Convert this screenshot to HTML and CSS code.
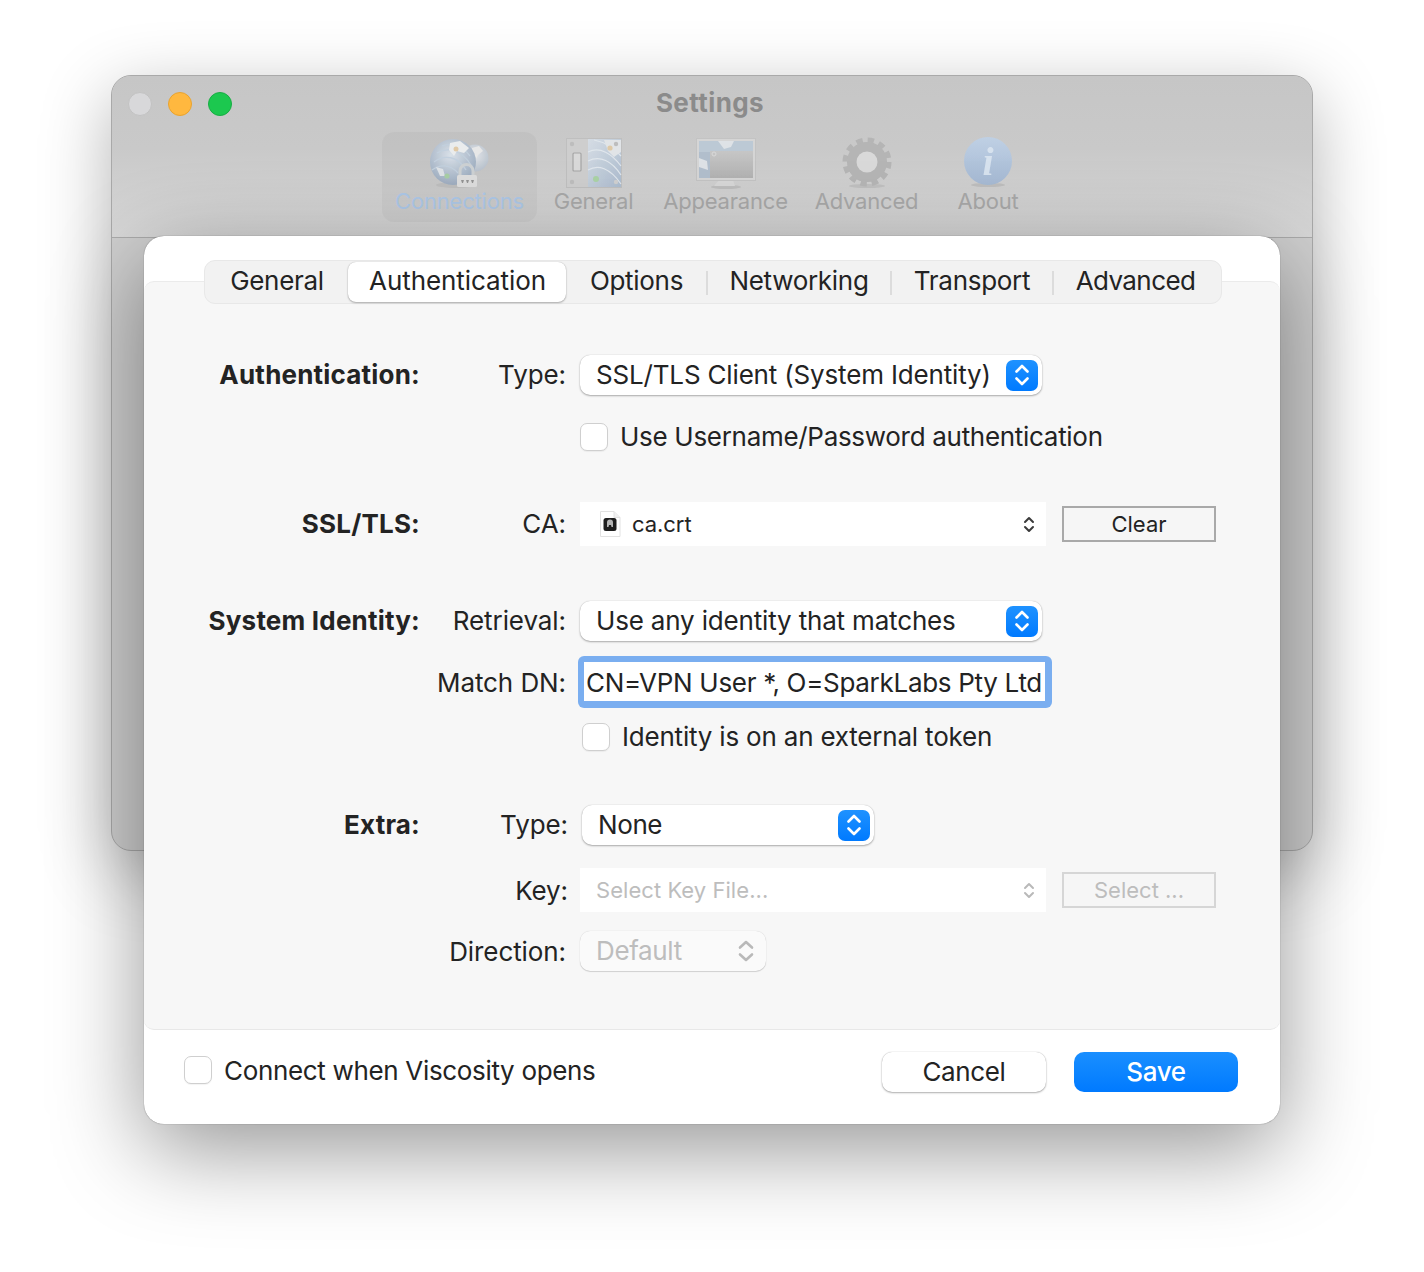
FILE: index.html
```html
<!DOCTYPE html>
<html lang="en">
<head>
<meta charset="utf-8">
<title>Settings</title>
<link rel="stylesheet" href="styles.css">
</head>
<body>
<div class="stage">
  <section class="window">
    <header class="titlebar">
      <div class="lights">
        <span class="light light-off"></span>
        <span class="light light-min"></span>
        <span class="light light-max"></span>
      </div>
      <div class="title">Settings</div>
      <nav class="toolbar">
        <div class="tool tool-connections">
          <svg class="tool-icon" width="64" height="54" viewBox="0 0 64 54">
            <defs>
              <radialGradient id="g1" cx=".45" cy=".35" r=".75"><stop offset="0" stop-color="#cfd6dd"/><stop offset="1" stop-color="#8c9cb0"/></radialGradient>
              <radialGradient id="g2" cx=".5" cy=".4" r=".7"><stop offset="0" stop-color="#d6d9dc"/><stop offset="1" stop-color="#a9b3bf"/></radialGradient>
            </defs>
            <ellipse cx="28" cy="49" rx="20" ry="3" fill="#b4b4b4"/>
            <circle cx="47" cy="22" r="13.5" fill="url(#g2)"/>
            <path d="M44 12l7-2 4 5-5 4-3 6-4-5z" fill="#dcdcdc"/>
            <circle cx="25" cy="26" r="23" fill="url(#g1)"/>
            <g fill="none" stroke="#b9c6d3" stroke-width="1.3">
              <path d="M4 34c8-6 18-6 26 3"/><path d="M6 26c10-8 24-6 32 8"/><path d="M9 17c10-6 24-4 34 12"/><path d="M14 10c9-3 20-1 28 10"/>
            </g>
            <path d="M22 7l10-2 9 7-5 5-7-2-3 5-5-6z" fill="#dfe1e2"/>
            <path d="M8 31l7 2 2 7-5 0z" fill="#d3d7db"/>
            <circle cx="28" cy="13" r="2.5" fill="#d5bf9f"/>
            <circle cx="19" cy="40" r="2.6" fill="#a0c49d"/>
            <path d="M32 40v-5a6.5 6.5 0 0 1 13 0v5" fill="none" stroke="#c3c7c9" stroke-width="3"/>
            <rect x="29" y="39" width="20" height="12" rx="1.5" fill="#d2d2d2"/>
            <path d="M33 44h3l-1 3h-1zM38 44h3l-1 3h-1zM43 44h3l-1 3h-1z" fill="#8c8c8c"/>
          </svg>
          <span class="tool-label tool-label-on">Connections</span>
        </div>
        <div class="tool">
          <svg class="tool-icon" width="56" height="54" viewBox="0 0 56 54">
            <defs>
              <linearGradient id="g3" x1="0" y1="0" x2="1" y2="1"><stop offset="0" stop-color="#cbd2d9"/><stop offset="1" stop-color="#a4b3c5"/></linearGradient>
            </defs>
            <rect x=".5" y="2.5" width="55" height="49" fill="#c4c4c4" stroke="#b6b6b6"/>
            <rect x="22" y="3" width="33" height="48" fill="url(#g3)"/>
            <g fill="none" stroke="#d5dbe1" stroke-width="1.2">
              <path d="M22 34c10-6 22-2 33 14"/><path d="M22 25c12-6 24 0 33 14"/><path d="M22 16c12-6 24 2 33 14"/><path d="M28 4c10 2 20 8 27 16"/>
            </g>
            <path d="M38 4h17v12l-7 5-6-6z" fill="#d6d9dc"/>
            <circle cx="44" cy="12" r="2.6" fill="#d3bf9f"/>
            <circle cx="30" cy="43" r="3" fill="#a2c89d"/>
            <circle cx="6" cy="8" r="2.2" fill="#b4b4b4"/><circle cx="6" cy="46" r="2.2" fill="#b4b4b4"/>
            <circle cx="50" cy="8" r="2.2" fill="#b4b4b4"/><circle cx="50" cy="46" r="2.2" fill="#c6c6c6"/>
            <rect x="7" y="17" width="8" height="18" rx="1" fill="#cfcfcf" stroke="#9d9d9d" stroke-width="1.2"/>
          </svg>
          <span class="tool-label">General</span>
        </div>
        <div class="tool">
          <svg class="tool-icon" width="60" height="54" viewBox="0 0 60 54">
            <defs>
              <linearGradient id="g4" x1="0" y1="0" x2="0" y2="1"><stop offset="0" stop-color="#bdbdbd"/><stop offset="1" stop-color="#a9a9a9"/></linearGradient>
            </defs>
            <ellipse cx="30" cy="51" rx="15" ry="2" fill="#b4b4b4"/>
            <path d="M23 44h14l2 6H18z" fill="#cdcdcd"/>
            <rect x=".5" y="2.5" width="59" height="42" fill="#cbcbcb" stroke="#bababa"/>
            <rect x="3" y="5" width="54" height="37" fill="#a9b5c2"/>
            <path d="M3 5h54v11H3z" fill="#b3bfcb"/>
            <path d="M22 5h16l-3 6-7 2zM3 22l8 3 1 9-9-3z" fill="#d3d7db"/>
            <rect x="14" y="15" width="43" height="27" fill="url(#g4)"/>
            <circle cx="18" cy="18" r="2" fill="none" stroke="#cfcfcf"/>
          </svg>
          <span class="tool-label">Appearance</span>
        </div>
        <div class="tool">
          <svg class="tool-icon" width="54" height="54" viewBox="0 0 54 54">
            <ellipse cx="27" cy="50" rx="18" ry="2" fill="#b6b6b6"/>
            <circle cx="27" cy="26" r="22" fill="none" stroke="#acacac" stroke-width="5" stroke-dasharray="6.4 5.12"/>
            <circle cx="27" cy="26" r="15" fill="none" stroke="#acacac" stroke-width="10"/>
            <circle cx="27" cy="26" r="10.500" fill="#cfcfcf"/>
          </svg>
          <span class="tool-label">Advanced</span>
        </div>
        <div class="tool">
          <svg class="tool-icon" width="50" height="54" viewBox="0 0 50 54">
            <defs>
              <linearGradient id="g5" x1="0" y1="0" x2="0" y2="1"><stop offset="0" stop-color="#b6c6d9"/><stop offset="1" stop-color="#9db0c9"/></linearGradient>
            </defs>
            <ellipse cx="25" cy="49" rx="17" ry="2" fill="#b4b4b4"/>
            <circle cx="25" cy="25" r="24" fill="url(#g5)"/>
            <text class="info-i" x="25" y="39" text-anchor="middle">i</text>
          </svg>
          <span class="tool-label">About</span>
        </div>
      </nav>
    </header>
  </section>

  <section class="sheet">
    <div class="tabs-wrap">
      <div class="tabs">
        <div class="tab tab-plain">General</div>
        <div class="tab tab-active">Authentication</div>
        <div class="tab tab-sep">Options</div>
        <div class="tab tab-sep">Networking</div>
        <div class="tab tab-sep">Transport</div>
        <div class="tab tab-last">Advanced</div>
      </div>
    </div>

    <div class="panel">
      <div class="row row-1">
        <div class="heading">Authentication:</div>
        <div class="label">Type:</div>
        <div class="popup popup-type">
          <span>SSL/TLS Client (System Identity)</span>
          <span class="stepper"><svg width="14" height="22" viewBox="0 0 14 22"><path d="M1.5 7.5L7 2l5.5 5.5M1.5 14.500L7 20l5.500-5.500"/></svg></span>
        </div>
      </div>
      <div class="row row-2">
        <div class="heading"></div>
        <div class="label"></div>
        <label class="check"><span class="box"></span><span class="check-text">Use Username/Password authentication</span></label>
      </div>

      <div class="row row-3">
        <div class="heading">SSL/TLS:</div>
        <div class="label">CA:</div>
        <div class="file-field">
          <svg class="doc" width="22" height="26" viewBox="0 0 22 26">
            <path d="M1.500 .5H15L21 6.500V25.500H1.500z" fill="#fff" stroke="#e2e2e2"/>
            <path d="M15 .5V6.500H21" fill="#f0f0f0" stroke="#e2e2e2"/>
            <rect x="4.500" y="7" width="13" height="13" rx="2.500" fill="#1e1e1e"/>
            <path d="M8 16v-4.500a3 3 0 0 1 6 0V16h-1.500l-.5-2h-2l-.5 2z" fill="#b5b5b5"/>
          </svg>
          <span class="file-name">ca.crt</span>
          <svg class="mini" width="12" height="17" viewBox="0 0 12 17"><path d="M2 6l4-4 4 4M2 11l4 4 4-4"/></svg>
        </div>
        <div class="square-btn">Clear</div>
      </div>

      <div class="row row-4">
        <div class="heading">System Identity:</div>
        <div class="label">Retrieval:</div>
        <div class="popup popup-type">
          <span>Use any identity that matches</span>
          <span class="stepper"><svg width="14" height="22" viewBox="0 0 14 22"><path d="M1.5 7.5L7 2l5.5 5.5M1.5 14.500L7 20l5.500-5.500"/></svg></span>
        </div>
      </div>
      <div class="row row-5">
        <div class="heading"></div>
        <div class="label label-low">Match DN:</div>
        <div class="focus-field"><div class="focus-input">CN=VPN User *, O=SparkLabs Pty Ltd</div></div>
      </div>
      <div class="row row-6">
        <div class="heading"></div>
        <div class="label"></div>
        <label class="check check-shift"><span class="box"></span><span class="check-text">Identity is on an external token</span></label>
      </div>

      <div class="row row-7">
        <div class="heading">Extra:</div>
        <div class="label label-shift">Type:</div>
        <div class="popup popup-none">
          <span>None</span>
          <span class="stepper"><svg width="14" height="22" viewBox="0 0 14 22"><path d="M1.5 7.5L7 2l5.5 5.5M1.5 14.500L7 20l5.500-5.500"/></svg></span>
        </div>
      </div>
      <div class="row row-8">
        <div class="heading"></div>
        <div class="label label-shift label-low">Key:</div>
        <div class="file-field file-off">
          <span class="file-name file-placeholder">Select Key File...</span>
          <svg class="mini" width="12" height="17" viewBox="0 0 12 17"><path d="M2 6l4-4 4 4M2 11l4 4 4-4"/></svg>
        </div>
        <div class="square-btn square-off">Select ...</div>
      </div>
      <div class="row row-9">
        <div class="heading"></div>
        <div class="label label-low">Direction:</div>
        <div class="popup popup-off">
          <span>Default</span>
          <svg class="mini-off" width="16" height="22" viewBox="0 0 16 22"><path d="M2 7.500L8 2l6 5.500M2 14.500L8 20l6-5.500"/></svg>
        </div>
      </div>
    </div>

    <footer class="footer">
      <label class="check"><span class="box"></span><span class="check-text">Connect when Viscosity opens</span></label>
      <div class="actions">
        <div class="btn btn-cancel">Cancel</div>
        <div class="btn btn-save">Save</div>
      </div>
    </footer>
  </section>
</div>
</body>
</html>
```
FILE: styles.css
```css
* { box-sizing: border-box; }
html, body { margin: 0; padding: 0; background: #fff; }
body { font-family: Inter, "Liberation Sans", sans-serif; color: #232323; }
.stage { position: relative; width: 1424px; height: 1272px; overflow: hidden; background: #fff; }

/* background window */
.window {
  position: absolute; left: 111px; top: 75px; width: 1202px; height: 776px;
  border-radius: 20px;
  background: #cfcfcf;
  border: 1px solid #a9a9a9;
  box-shadow: 0 20px 70px rgba(0,0,0,.3);
}
.titlebar {
  height: 162px; border-bottom: 1px solid #ababab; border-radius: 19px 19px 0 0;
  background: linear-gradient(#c6c6c6, #c9c9c9 45%, #d8d8d8);
  display: flex; flex-direction: column; position: relative;
}
.lights { position: absolute; left: 16px; top: 16px; display: flex; gap: 16px; }
.light { width: 24px; height: 24px; border-radius: 50%; }
.light-off { background: #d8d8da; border: 1px solid #c2c2c2; }
.light-min { background: #ffb83f; border: 1px solid #e9a32f; }
.light-max { background: #1cc84f; border: 1px solid #18ad44; }
.title { text-align: center; margin-top: 11px; height: 32px; line-height: 32px; font-size: 26px; font-weight: 700; color: #8b8b8b; letter-spacing: .42px; padding-right: 4px; }
.toolbar { display: flex; margin: 13px 0 0 270px; }
.tool { height: 90px; display: flex; flex-direction: column; align-items: center; padding-top: 4px; }
.tool:nth-child(1) { width: 155px; border-radius: 12px; background: rgba(0,0,0,.03); }
.tool:nth-child(2) { width: 113px; }
.tool:nth-child(3) { width: 151px; }
.tool:nth-child(4) { width: 131px; }
.tool:nth-child(5) { width: 112px; }
.tool-icon { display: block; height: 54px; flex: none; filter: blur(.4px) brightness(1.05); }
.tool-label { font-size: 22px; line-height: 26px; margin-top: -2px; color: #a9a9a9; letter-spacing: -.2px; white-space: nowrap; }
.tool-label-on { color: #adc8e8; }
.info-i { font-family: "Liberation Serif", serif; font-style: italic; font-weight: 700; font-size: 40px; fill: #cdd7e3; }

/* sheet */
.sheet {
  position: absolute; left: 144px; top: 236px; width: 1136px; height: 888px;
  background: #fff; border-radius: 20px;
  box-shadow: 0 0 1px rgba(0,0,0,.6), 0 25px 90px rgba(0,0,0,.42);
  display: flex; flex-direction: column;
}
.tabs-wrap { height: 45px; position: relative; flex: none; }
.tabs {
  position: absolute; left: 60px; top: 24px; width: 1018px; height: 44px; z-index: 1;
  display: grid; grid-template-columns: 142px 218px 141px 184px 162px 167px;
  padding: 1px; align-items: center;
  background: #f2f2f2; border: 1px solid #e8e8e8; border-radius: 11px;
}
.tab { position: relative; height: 40px; line-height: 38px; text-align: center; font-size: 26px; letter-spacing: -.3px; color: #232323; }
.tab-active { background: #fff; border-radius: 8px; padding-left: 1px; letter-spacing: -.08px; box-shadow: 0 1px 2px rgba(0,0,0,.28), 0 0 1px rgba(0,0,0,.25); }
.tab-last { letter-spacing: -.6px; padding-right: 2px; }
.tab-sep::after { content: ""; position: absolute; right: -1px; top: 9px; width: 2px; height: 24px; background: #dcdcdc; }

.panel {
  flex: none; height: 749px; padding-top: 73px;
  background: #f7f7f7; border-top: 1px solid #ebebeb; border-bottom: 1px solid #e8e8e8; border-radius: 10px;
}
.row { display: flex; align-items: center; height: 40px; }
.row-2 { margin-top: 22px; }
.row-3 { margin-top: 45px; height: 44px; }
.row-4 { margin-top: 55px; }
.row-5 { margin-top: 15px; height: 52px; }
.row-6 { margin-top: 9px; }
.row-7 { margin-top: 48px; }
.row-8 { margin-top: 23px; height: 44px; }
.row-9 { margin-top: 19px; }
.heading { width: 276px; flex: none; text-align: right; padding-bottom: 2px; font-size: 26px; font-weight: 700; letter-spacing: .2px; color: #232323; white-space: nowrap; }
.label { width: 146px; flex: none; text-align: right; padding-bottom: 2px; font-size: 26px; letter-spacing: -.08px; white-space: nowrap; color: #232323; }
.label-shift { width: 148px; }
.label-low { padding-bottom: 0; }

.popup {
  margin-left: 14px; height: 40px; padding-left: 16px; padding-right: 4px; padding-bottom: 2px;
  display: flex; align-items: center; justify-content: space-between;
  background: #fff; border-radius: 10px; font-size: 26px; letter-spacing: -.17px; white-space: nowrap;
  box-shadow: 0 1px 2px rgba(0,0,0,.3), 0 0 1px rgba(0,0,0,.25);
}
.popup-type { width: 462px; }
.popup-none { width: 292px; padding-left: 16px; letter-spacing: -.4px; }
.popup-off { width: 186px; color: #bdbdbd; background: #fafafa; padding-right: 12px; letter-spacing: -.36px; box-shadow: 0 1px 1px rgba(0,0,0,.14), 0 0 1px rgba(0,0,0,.2); }
.stepper {
  width: 32px; height: 31px; flex: none; border-radius: 7px; margin-top: 2px;
  background: linear-gradient(#1f92ff, #007aff);
  display: flex; align-items: center; justify-content: center;
}
.stepper path { fill: none; stroke: #fff; stroke-width: 2.600; stroke-linecap: round; stroke-linejoin: round; }
.mini-off { margin-top: 2px; }
.mini-off path { fill: none; stroke: #b9b9b9; stroke-width: 2.600; stroke-linecap: round; stroke-linejoin: round; }

.check { margin-left: 14px; display: flex; align-items: center; gap: 12px; font-size: 26px; letter-spacing: -.3px; white-space: nowrap; }
.check-text { padding-bottom: 2px; }
.check-shift { margin-left: 16px; letter-spacing: -.2px; }
.box { width: 28px; height: 28px; flex: none; background: #fff; border: 1px solid #cfcfcf; border-radius: 7px; box-shadow: 0 1px 1px rgba(0,0,0,.05); }

.file-field {
  margin-left: 14px; width: 466px; height: 44px; flex: none; background: #fff;
  display: flex; align-items: center; padding: 0 11px 0 19px; font-size: 22px;
}
.doc { flex: none; margin-right: 11px; }
.file-name { flex: 1; letter-spacing: -.05px; padding-bottom: 1px; }
.file-off { padding-left: 16px; margin-left: 12px; }
.file-placeholder { color: #bdbdbd; letter-spacing: .05px; }
.mini { flex: none; }
.mini path { fill: none; stroke: #3a3a3a; stroke-width: 2; stroke-linecap: round; stroke-linejoin: round; }
.file-off .mini path { stroke: #b9b9b9; }
.square-btn {
  margin-left: 16px; width: 154px; height: 36px; flex: none; padding-bottom: 1px;
  display: flex; align-items: center; justify-content: center;
  font-size: 22px; background: #f6f6f6; border: 2px solid #a9a9a9; color: #232323;
}
.square-off { border-color: #d6d6d6; color: #bdbdbd; }

.focus-field {
  margin-left: 12px; width: 474px; height: 52px; flex: none; padding: 6px 7px 6px 6px;
  background: #7aaef0; border-radius: 6px;
}
.focus-input { height: 39px; line-height: 41px; background: #fff; padding-left: 2px; font-size: 26px; letter-spacing: -.3px; white-space: nowrap; overflow: hidden; }

.footer { flex: 1; display: flex; align-items: center; justify-content: space-between; padding: 0 42px 8px 40px; margin-top: -2px; }
.footer .check { margin-left: 0; margin-bottom: 4px; letter-spacing: -.33px; }
.footer .check-text { padding-bottom: 0; }
.actions { display: flex; align-items: center; gap: 28px; }
.btn { width: 164px; height: 40px; line-height: 39px; text-align: center; border-radius: 10px; font-size: 26px; letter-spacing: -.36px; }
.btn-cancel { background: #fff; color: #232323; box-shadow: 0 1px 2px rgba(0,0,0,.3), 0 0 1px rgba(0,0,0,.3); }
.btn-save { background: linear-gradient(#1a8fff, #007aff); color: #fff; font-weight: 500; }
```
